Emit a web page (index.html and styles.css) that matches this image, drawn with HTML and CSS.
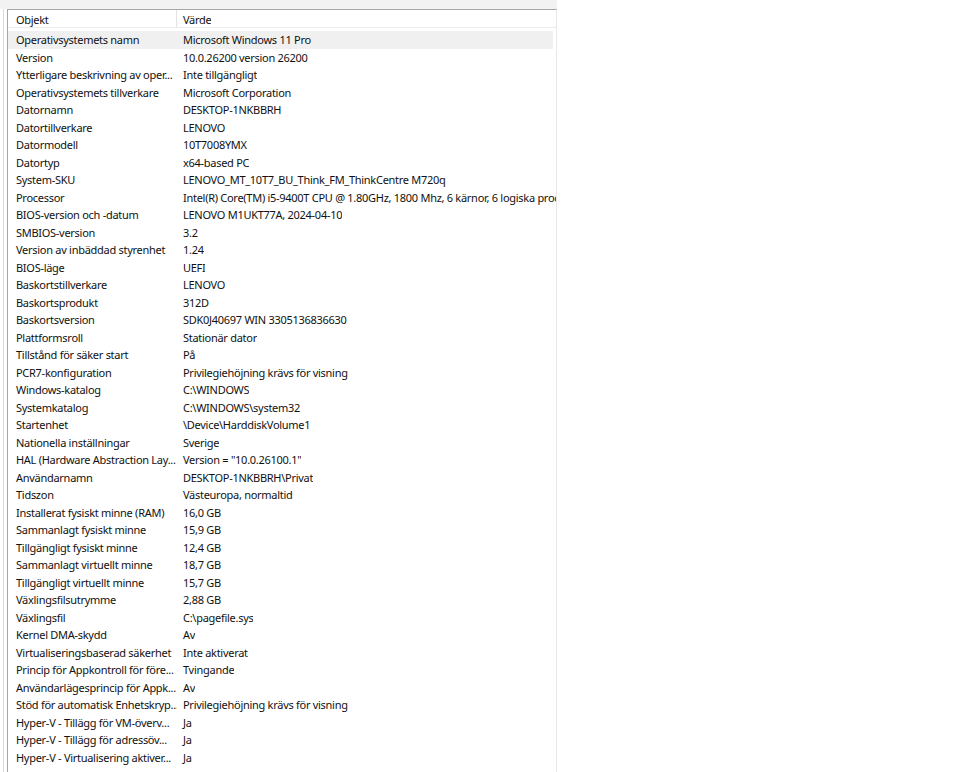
FILE: index.html
```html
<!DOCTYPE html>
<html lang="sv">
<head>
<meta charset="utf-8">
<title>Systeminformation</title>
<link rel="stylesheet" href="styles.css">
</head>
<body>
<div class="window">
  <div class="topband"></div>
  <div class="body">
    <div class="splitter"></div>
    <div class="list">
      <div class="header">
        <div class="col1">Objekt</div>
        <div class="col2">Värde</div>
      </div>
      <div class="rows">
        <div class="row sel"><div class="col1">Operativsystemets namn</div><div class="col2">Microsoft Windows 11 Pro</div></div>
        <div class="row"><div class="col1">Version</div><div class="col2">10.0.26200 version 26200</div></div>
        <div class="row"><div class="col1">Ytterligare beskrivning av oper...</div><div class="col2">Inte tillgängligt</div></div>
        <div class="row"><div class="col1">Operativsystemets tillverkare</div><div class="col2">Microsoft Corporation</div></div>
        <div class="row"><div class="col1">Datornamn</div><div class="col2">DESKTOP-1NKBBRH</div></div>
        <div class="row"><div class="col1">Datortillverkare</div><div class="col2">LENOVO</div></div>
        <div class="row"><div class="col1">Datormodell</div><div class="col2">10T7008YMX</div></div>
        <div class="row"><div class="col1">Datortyp</div><div class="col2">x64-based PC</div></div>
        <div class="row"><div class="col1">System-SKU</div><div class="col2">LENOVO_MT_10T7_BU_Think_FM_ThinkCentre M720q</div></div>
        <div class="row"><div class="col1">Processor</div><div class="col2">Intel(R) Core(TM) i5-9400T CPU @ 1.80GHz, 1800 Mhz, 6 kärnor, 6 logiska processorer</div></div>
        <div class="row"><div class="col1">BIOS-version och -datum</div><div class="col2">LENOVO M1UKT77A, 2024-04-10</div></div>
        <div class="row"><div class="col1">SMBIOS-version</div><div class="col2">3.2</div></div>
        <div class="row"><div class="col1">Version av inbäddad styrenhet</div><div class="col2">1.24</div></div>
        <div class="row"><div class="col1">BIOS-läge</div><div class="col2">UEFI</div></div>
        <div class="row"><div class="col1">Baskortstillverkare</div><div class="col2">LENOVO</div></div>
        <div class="row"><div class="col1">Baskortsprodukt</div><div class="col2">312D</div></div>
        <div class="row"><div class="col1">Baskortsversion</div><div class="col2">SDK0J40697 WIN 3305136836630</div></div>
        <div class="row"><div class="col1">Plattformsroll</div><div class="col2">Stationär dator</div></div>
        <div class="row"><div class="col1">Tillstånd för säker start</div><div class="col2">På</div></div>
        <div class="row"><div class="col1">PCR7-konfiguration</div><div class="col2">Privilegiehöjning krävs för visning</div></div>
        <div class="row"><div class="col1">Windows-katalog</div><div class="col2">C:\WINDOWS</div></div>
        <div class="row"><div class="col1">Systemkatalog</div><div class="col2">C:\WINDOWS\system32</div></div>
        <div class="row"><div class="col1">Startenhet</div><div class="col2">\Device\HarddiskVolume1</div></div>
        <div class="row"><div class="col1">Nationella inställningar</div><div class="col2">Sverige</div></div>
        <div class="row"><div class="col1">HAL (Hardware Abstraction Lay...</div><div class="col2">Version = "10.0.26100.1"</div></div>
        <div class="row"><div class="col1">Användarnamn</div><div class="col2">DESKTOP-1NKBBRH\Privat</div></div>
        <div class="row"><div class="col1">Tidszon</div><div class="col2">Västeuropa, normaltid</div></div>
        <div class="row"><div class="col1">Installerat fysiskt minne (RAM)</div><div class="col2">16,0 GB</div></div>
        <div class="row"><div class="col1">Sammanlagt fysiskt minne</div><div class="col2">15,9 GB</div></div>
        <div class="row"><div class="col1">Tillgängligt fysiskt minne</div><div class="col2">12,4 GB</div></div>
        <div class="row"><div class="col1">Sammanlagt virtuellt minne</div><div class="col2">18,7 GB</div></div>
        <div class="row"><div class="col1">Tillgängligt virtuellt minne</div><div class="col2">15,7 GB</div></div>
        <div class="row"><div class="col1">Växlingsfilsutrymme</div><div class="col2">2,88 GB</div></div>
        <div class="row"><div class="col1">Växlingsfil</div><div class="col2">C:\pagefile.sys</div></div>
        <div class="row"><div class="col1">Kernel DMA-skydd</div><div class="col2">Av</div></div>
        <div class="row"><div class="col1">Virtualiseringsbaserad säkerhet</div><div class="col2">Inte aktiverat</div></div>
        <div class="row"><div class="col1">Princip för Appkontroll för före...</div><div class="col2">Tvingande</div></div>
        <div class="row"><div class="col1">Användarlägesprincip för Appk...</div><div class="col2">Av</div></div>
        <div class="row"><div class="col1">Stöd för automatisk Enhetskryp...</div><div class="col2">Privilegiehöjning krävs för visning</div></div>
        <div class="row"><div class="col1">Hyper-V - Tillägg för VM-överv...</div><div class="col2">Ja</div></div>
        <div class="row"><div class="col1">Hyper-V - Tillägg för adressöv...</div><div class="col2">Ja</div></div>
        <div class="row"><div class="col1">Hyper-V - Virtualisering aktiver...</div><div class="col2">Ja</div></div>
      </div>
    </div>
  </div>
</div>
</body>
</html>
```

FILE: styles.css
```css
html, body {
  margin: 0;
  padding: 0;
  background: #ffffff;
}
body {
  width: 960px;
  height: 772px;
  overflow: hidden;
  font-family: "Noto Sans", "Open Sans", sans-serif;
  font-size: 11px;
  letter-spacing: -0.28px;
  color: #111111;
}
.window {
  width: 557px;
  height: 772px;
  display: flex;
  flex-direction: column;
}
.topband {
  height: 9px;
  background: #f2f2f2;
  flex: none;
}
.body {
  flex: 1;
  display: flex;
  min-height: 0;
}
.splitter {
  width: 3px;
  margin-left: 3px;
  border-left: 1px solid #dadada;
  flex: none;
}
.list {
  flex: 1;
  border-left: 1px solid #a6a6a6;
  border-top: 1px solid #a6a6a6;
  border-right: 1px solid #e8e8e8;
  overflow: hidden;
  background: #ffffff;
}
.header {
  display: flex;
  height: 17px;
  border-bottom: 1px solid #ececec;
  line-height: 20px;
}
.header .col1 {
  border-right: 1px solid #e3e3e3;
  width: 160px;
}
.col1 {
  width: 161px;
  padding-left: 8px;
  flex: none;
  white-space: nowrap;
  overflow: hidden;
}
.col2 {
  padding-left: 6px;
  white-space: nowrap;
  overflow: hidden;
}
.rows {
  padding-top: 3px;
}
.row {
  display: flex;
  height: 17.5px;
  line-height: 17.5px;
}
.row.sel {
  background: #f0f0f0;
  margin-right: 3px;
}
```
